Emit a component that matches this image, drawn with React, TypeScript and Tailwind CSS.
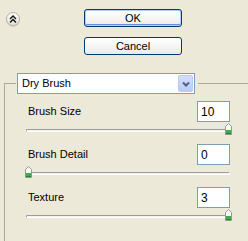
import React from "react";

function Thumb() {
  return (
    <svg width="7" height="12" viewBox="0 0 7 12" className="block">
      <path d="M3.5 0.5 L6.5 3.5 V11.5 H0.5 V3.5 Z" fill="#fbfbf8" stroke="#8a9c8c" />
      <rect x="1" y="7" width="5" height="4" fill="#3fae4a" />
      <rect x="1" y="10" width="5" height="1" fill="#21872d" />
    </svg>
  );
}

function Setting({ label, value, pos }: { label: string; value: string; pos: "left" | "right" }) {
  return (
    <div className="flex flex-col">
      <div className="flex h-[21px] items-center pl-[23px] pr-[18px]">
        <span className="flex-1 text-black">{label}</span>
        <div className="flex h-[21px] w-[33px] items-center border border-[#7F9DB9] bg-white pl-[3px] text-[12px] text-black">
          {value}
        </div>
      </div>
      <div className="relative ml-[20px] h-[22px] w-[207px]">
        <div className="ml-[1px] mr-[2px] mt-[7px] h-[3px] rounded-full border-l border-t border-[#9D9C99] border-b border-b-white border-r border-r-white bg-[#f3f2ec]" />
        <div className={"absolute top-[1px] " + (pos === "left" ? "left-0" : "right-0")}>
          <Thumb />
        </div>
      </div>
    </div>
  );
}

export default function App() {
  return (
    <div className="flex h-[241px] w-[248px] flex-col overflow-hidden bg-[#ECE9D8] font-['Liberation_Sans',Arial,sans-serif] text-[11px] leading-none text-black">
      <div className="flex h-[73px] shrink-0">
        <div className="flex w-[84px] flex-col">
          <div className="ml-[6px] mt-[12px] flex h-[14px] w-[14px] items-center justify-center rounded-full border border-[#b2b1a6] bg-linear-to-b from-white to-[#e3e2da] shadow-[0_1px_0_#d6d4c8]">
            <svg width="8" height="8" viewBox="0 0 8 8">
              <polyline points="1,4 4,1 7,4" fill="none" stroke="#111" strokeWidth="1.4" />
              <polyline points="1,7.5 4,4.5 7,7.5" fill="none" stroke="#111" strokeWidth="1.4" />
            </svg>
          </div>
          <span className="-ml-[4px] mt-[18px] text-[11px]">t</span>
        </div>
        <div className="flex flex-col gap-[10px] pt-[9px]">
          <button className="flex h-[18px] w-[98px] items-center justify-center rounded-[3px] border border-[#003C74] bg-linear-to-b from-white to-[#ecebe6] shadow-[inset_0_0_0_1px_#b5cdf3,inset_0_-1px_0_1px_#6b8ee3] text-black">
            OK
          </button>
          <button className="flex h-[18px] w-[98px] items-center justify-center rounded-[3px] border border-[#003C74] bg-linear-to-b from-white to-[#ecebe6] text-black">
            Cancel
          </button>
        </div>
      </div>
      <div className="ml-[4px] flex flex-1 flex-col">
        <div className="flex h-[21px] shrink-0">
          <div className="mt-[10px] w-[12px] border-l border-t border-[#aaa99c]" />
          <div className="ml-[1px] flex h-[21px] w-[178px] items-center border border-[#7F9DB9] bg-white">
            <span className="flex-1 pl-[4px]">Dry Brush</span>
            <div className="my-[1px] mr-[1px] flex h-[17px] w-[15px] items-center justify-center rounded-[2px] border border-[#b9cbf3] bg-linear-to-b from-[#d3def9] to-[#b9cbf5]">
              <svg width="8" height="6" viewBox="0 0 8 6">
                <polyline points="1,1.5 4,4.5 7,1.5" fill="none" stroke="#4d6185" strokeWidth="2" />
              </svg>
            </div>
          </div>
          <div className="ml-[3px] mt-[10px] h-px flex-1 bg-[#aaa99c]" />
        </div>
        <div className="flex flex-1 flex-col border-l border-[#aaa99c] pt-[7px]">
          <Setting label="Brush Size" value="10" pos="right" />
          <Setting label="Brush Detail" value="0" pos="left" />
          <Setting label="Texture" value="3" pos="right" />
        </div>
      </div>
    </div>
  );
}
